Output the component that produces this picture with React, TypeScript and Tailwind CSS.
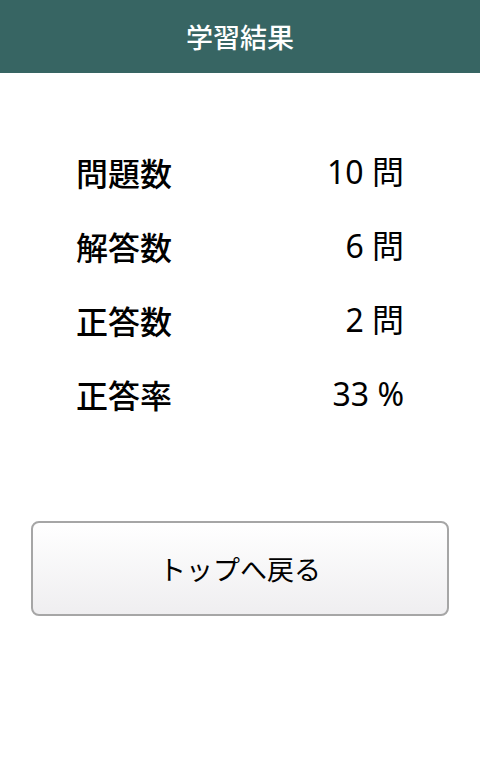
const rows = [
  { label: '問題数', value: '10 問' },
  { label: '解答数', value: '6 問' },
  { label: '正答数', value: '2 問' },
  { label: '正答率', value: '33 %' },
]

export default function App() {
  return (
    <div className="w-[480px] h-[760px] bg-white font-['Noto_Sans_CJK_JP',sans-serif] text-black">
      {/* Header */}
      <header className="h-[73px] bg-[#376563] flex items-center justify-center">
        <h1 className="text-[27px] font-medium text-white leading-none">学習結果</h1>
      </header>

      {/* Results */}
      <div className="mt-[62px] px-[76px]">
        {rows.map((r) => (
          <div key={r.label} className="h-[74px] flex items-center justify-between">
            <span className="text-[32px] font-medium leading-none">{r.label}</span>
            <span className="text-[32px] leading-none font-['Noto_Sans','Noto_Sans_CJK_JP',sans-serif]">
              {r.value}
            </span>
          </div>
        ))}
      </div>

      {/* Back button */}
      <div className="mt-[90px] px-[31px]">
        <button className="w-full h-[95px] rounded-[8px] border-2 border-[#a6a6a6] bg-gradient-to-b from-white to-[#efeef0] flex items-center justify-center">
          <span className="text-[27px] leading-none">トップへ戻る</span>
        </button>
      </div>
    </div>
  )
}
